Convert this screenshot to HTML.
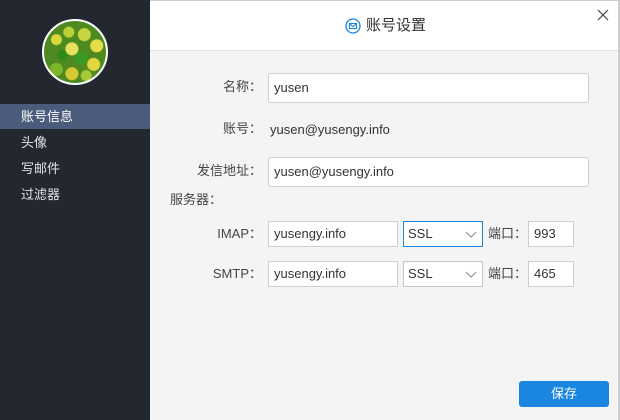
<!DOCTYPE html>
<html><head><meta charset="utf-8"><style>
*{box-sizing:border-box;margin:0;padding:0}
body{width:620px;height:420px;overflow:hidden;font-family:"Liberation Sans","Noto Sans CJK SC",sans-serif;font-size:13px;line-height:16px;color:#333;background:#f4f4f4;position:relative}
.a{position:absolute}
.side{left:0;top:0;width:150px;height:420px;background:#23272f}
.av{left:42px;top:19px;width:66px;height:66px;border-radius:50%;border:2px solid #fff;overflow:hidden;background:
radial-gradient(circle at 20% 30%,#d8d83a 0 5px,transparent 6px),
radial-gradient(circle at 40% 18%,#b9d23a 0 5px,transparent 6px),
radial-gradient(circle at 65% 22%,#c9d640 0 6px,transparent 7px),
radial-gradient(circle at 85% 40%,#e6dc4a 0 6px,transparent 7px),
radial-gradient(circle at 45% 45%,#e8e060 0 6px,transparent 7px),
radial-gradient(circle at 30% 55%,#2f8a1a 0 5px,transparent 6px),
radial-gradient(circle at 60% 60%,#3a9a22 0 6px,transparent 7px),
radial-gradient(circle at 80% 70%,#e0d83c 0 6px,transparent 7px),
radial-gradient(circle at 20% 78%,#7fb52a 0 6px,transparent 7px),
radial-gradient(circle at 45% 85%,#d6c832 0 6px,transparent 7px),
radial-gradient(circle at 68% 88%,#a8c836 0 5px,transparent 6px),
#4e8a20}
.mi{left:0;width:150px;height:25px;line-height:25px;padding-left:21px;color:#dfe3ea;font-size:13px}
.hdr{left:150px;top:0;width:470px;height:51px;background:#fff;border-bottom:1px solid #e2e2e2}
.lbl{text-align:right;width:112px;left:150px;color:#444}
.in{background:#fff;border:1px solid #cfcfcf;border-radius:3px;padding-left:5px;color:#333;font-size:13px;display:flex;align-items:center}
.sel{background:#fff;border:1px solid #c6c6c6;padding-left:4px;display:flex;align-items:center}
</style></head><body>
<div class="a side"></div>
<div class="a av"></div>
<div class="a mi" style="top:104px;background:#4a5b7b;color:#fff">账号信息</div>
<div class="a mi" style="top:130px">头像</div>
<div class="a mi" style="top:156px">写邮件</div>
<div class="a mi" style="top:182px">过滤器</div>
<div class="a hdr"></div>
<svg class="a" style="left:345px;top:18px" width="16" height="16" viewBox="0 0 16 16"><circle cx="8" cy="8" r="7" fill="none" stroke="#1a86e0" stroke-width="1.3"/><rect x="4.5" y="5.5" width="7" height="5" fill="none" stroke="#1a86e0" stroke-width="1.1"/><path d="M4.5 5.8L8 8.5L11.5 5.8" fill="none" stroke="#1a86e0" stroke-width="1.1"/></svg>
<div class="a" style="left:366px;top:16px;font-size:15px;line-height:20px;color:#333">账号设置</div>
<svg class="a" style="left:597px;top:9px" width="12" height="12" viewBox="0 0 12 12"><path d="M1 1L11 11M11 1L1 11" stroke="#444" stroke-width="1.2"/></svg>
<div class="a lbl" style="top:79px">名称：</div>
<div class="a in" style="left:268px;top:73px;width:321px;height:30px">yusen</div>
<div class="a lbl" style="top:121px">账号：</div>
<div class="a" style="left:270px;top:122px">yusen@yusengy.info</div>
<div class="a lbl" style="top:163px">发信地址：</div>
<div class="a in" style="left:268px;top:157px;width:321px;height:30px">yusen@yusengy.info</div>
<div class="a" style="left:170px;top:192px;color:#444">服务器：</div>
<div class="a lbl" style="top:226px">IMAP：</div>
<div class="a in" style="left:268px;top:221px;width:130px;height:26px;border-radius:0">yusengy.info</div>
<div class="a sel" style="left:403px;top:221px;width:80px;height:26px;border-color:#1a86e0">SSL<svg style="position:absolute;right:5px;top:9px" width="12" height="8"><path d="M1 1L6 6L11 1" fill="none" stroke="#888"/></svg></div>
<div class="a" style="left:488px;top:226px;color:#444">端口：</div>
<div class="a in" style="left:528px;top:221px;width:46px;height:26px;border-radius:0">993</div>
<div class="a lbl" style="top:266px">SMTP：</div>
<div class="a in" style="left:268px;top:261px;width:130px;height:26px;border-radius:0">yusengy.info</div>
<div class="a sel" style="left:403px;top:261px;width:80px;height:26px">SSL<svg style="position:absolute;right:5px;top:9px" width="12" height="8"><path d="M1 1L6 6L11 1" fill="none" stroke="#888"/></svg></div>
<div class="a" style="left:488px;top:266px;color:#444">端口：</div>
<div class="a in" style="left:528px;top:261px;width:46px;height:26px;border-radius:0">465</div>
<div class="a" style="left:519px;top:381px;width:90px;height:26px;background:#1a86e0;border-radius:3px;color:#fff;text-align:center;line-height:26px">保存</div>
<div class="a" style="left:618px;top:0;width:2px;height:420px;background:#cfcfcf"></div>
<div class="a" style="left:150px;top:0;width:470px;height:1px;background:#cfcfcf"></div>
</body></html>
